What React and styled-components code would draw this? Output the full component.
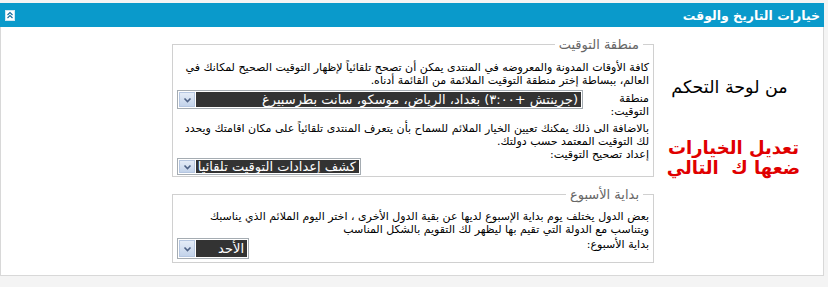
import React from "react";
import styled, { createGlobalStyle } from "styled-components";

const GlobalStyle = createGlobalStyle`
  html, body {
    margin: 0;
    padding: 0;
    background: #f4f4f4;
  }
  body {
    font-family: "DejaVu Sans", "Noto Sans", sans-serif;
  }
`;

const Page = styled.div`
  width: 828px;
  height: 287px;
  padding-top: 3px;
  box-sizing: border-box;
  overflow: hidden;
`;

const Panel = styled.div`
  width: 824px;
  background: #fff;
  border: 1px solid #d8d8d8;
  border-top: none;
  box-sizing: border-box;
`;

const Header = styled.div`
  height: 24px;
  margin: 0 -1px;
  background: #0a9acb;
  display: flex;
  align-items: center;
  justify-content: space-between;
  direction: rtl;
  padding: 0 4px 0 5px;
  color: #fff;
  font-weight: bold;
  font-size: 12.5px;
`;

const Collapse = styled.span`
  display: flex;
  width: 10px;
  height: 11px;
`;

const Body = styled.div`
  display: grid;
  grid-template-columns: 171px 482px 1fr;
  padding: 10px 0 12px;
`;

const Stack = styled.div`
  grid-column: 2;
  display: flex;
  flex-direction: column;
  gap: 10px;
`;

const Fieldset = styled.fieldset`
  direction: rtl;
  margin: 0;
  padding: 8px 4px ${(p) => p.$bottom}px 4px;
  border: 1px solid #d0d0d0;
  font-size: 11px;
  color: #000;
`;

const Legend = styled.legend`
  font-size: 13px;
  line-height: 15px;
  color: #666;
  padding: 0 4px;
  margin-right: 6px;
`;

const Desc = styled.div`
  line-height: 13px;
  white-space: nowrap;
  margin-top: ${(p) => p.$top || 0}px;
`;

const Row = styled.div`
  display: flex;
  justify-content: space-between;
  align-items: flex-start;
  margin-top: ${(p) => p.$top || 0}px;
`;

const Label = styled.div`
  line-height: 13px;
  padding-top: ${(p) => p.$top || 0}px;
`;

const Select = styled.div`
  direction: rtl;
  display: flex;
  width: ${(p) => p.$width}px;
  height: ${(p) => p.$height || 19}px;
  margin-top: ${(p) => p.$top || 0}px;
  border: 1px solid #a5acb2;
  background: #fff;
  box-sizing: border-box;
  padding: 1px;
  gap: 1px;
`;

const Value = styled.div`
  flex: 1;
  background: #333;
  color: #fff;
  font-size: 13px;
  line-height: 15px;
  padding: 0 3px;
  white-space: nowrap;
  overflow: hidden;
  display: flex;
  align-items: center;
`;

const Arrow = styled.div`
  width: 16px;
  background: linear-gradient(#e4ecf7, #c3d3ea);
  border: 1px solid #b5c6e0;
  box-sizing: border-box;
  display: flex;
  align-items: center;
  justify-content: center;
`;

const Notes = styled.div`
  grid-column: 3;
  direction: rtl;
  display: flex;
  flex-direction: column;
  align-items: center;
  padding-top: 40px;
  padding-right: 12px;
`;

const Note = styled.div`
  font-size: ${(p) => (p.$bold ? 18 : 17.5)}px;
  line-height: 20px;
  color: ${(p) => p.$color || "#000"};
  font-weight: ${(p) => (p.$bold ? "bold" : "normal")};
  margin-top: ${(p) => p.$top || 0}px;
  margin-right: ${(p) => (p.$bold ? -2 : 6)}px;
  white-space: pre;
`;

const Chevron = () => (
  <svg width="9" height="6" viewBox="0 0 9 6">
    <path d="M1.5 1.5 L4.5 4.5 L7.5 1.5" fill="none" stroke="#4d6185" strokeWidth="1.6" />
  </svg>
);

const CollapseIcon = () => (
  <svg width="10" height="11" viewBox="0 0 10 11">
    <rect x="0.5" y="0.5" width="9" height="10" fill="#fff" stroke="#cfe6f2" />
    <path d="M2.5 5 L5 2.5 L7.5 5 M2.5 8 L5 5.5 L7.5 8" fill="none" stroke="#1a6e9e" strokeWidth="1.2" />
  </svg>
);

const Dropdown = ({ width, height, top, children }) => (
  <Select $width={width} $height={height} $top={top}>
    <Value>{children}</Value>
    <Arrow>
      <Chevron />
    </Arrow>
  </Select>
);

export default function App() {
  return (
    <Page>
      <GlobalStyle />
      <Panel>
        <Header>
          <span>خيارات التاريخ والوقت</span>
          <Collapse>
            <CollapseIcon />
          </Collapse>
        </Header>
        <Body>
          <Stack>
            <Fieldset $bottom={1}>
              <Legend>منطقة التوقيت</Legend>
              <Desc $top={1}>
                كافة الأوقات المدونة والمعروضه في المنتدى يمكن أن تصحح تلقائياً لإظهار التوقيت الصحيح لمكانك في
                <br />
                العالم، ببساطة إختر منطقة التوقيت الملائمة من القائمة أدناه.
              </Desc>
              <Row $top={3}>
                <Label $top={2}>
                  منطقة
                  <br />
                  التوقيت:
                </Label>
                <Dropdown width={406}>(جرينتش +٣:٠٠) بغداد، الرياض، موسكو، سانت بطرسبيرغ</Dropdown>
              </Row>
              <Desc $top={4}>
                بالاضافة الى ذلك يمكنك تعيين الخيار الملائم للسماح بأن يتعرف المنتدى تلقائياً على مكان اقامتك ويحدد
                <br />
                لك التوقيت المعتمد حسب دولتك.
              </Desc>
              <Row>
                <Label>إعداد تصحيح التوقيت:</Label>
                <Dropdown width={184} height={17} top={10}>
                  كشف إعدادات التوقيت تلقائيا
                </Dropdown>
              </Row>
            </Fieldset>
            <Fieldset $bottom={3}>
              <Legend>بداية الأسبوع</Legend>
              <Desc>
                بعض الدول يختلف يوم بداية الإسبوع لديها عن بقية الدول الأخرى ، اختر اليوم الملائم الذي يناسبك
                <br />
                ويتناسب مع الدولة التي تقيم بها ليظهر لك التقويم بالشكل المناسب
              </Desc>
              <Row $top={2}>
                <Label>بداية الأسبوع:</Label>
                <Dropdown width={72} height={21}>
                  الأحد
                </Dropdown>
              </Row>
            </Fieldset>
          </Stack>
          <Notes>
            <Note>من لوحة التحكم</Note>
            <Note $color="#e00000" $bold $top={41}>
              تعديل الخيارات
            </Note>
            <Note $color="#e00000" $bold>
              {"ضعها ك  التالي"}
            </Note>
          </Notes>
        </Body>
      </Panel>
    </Page>
  );
}
